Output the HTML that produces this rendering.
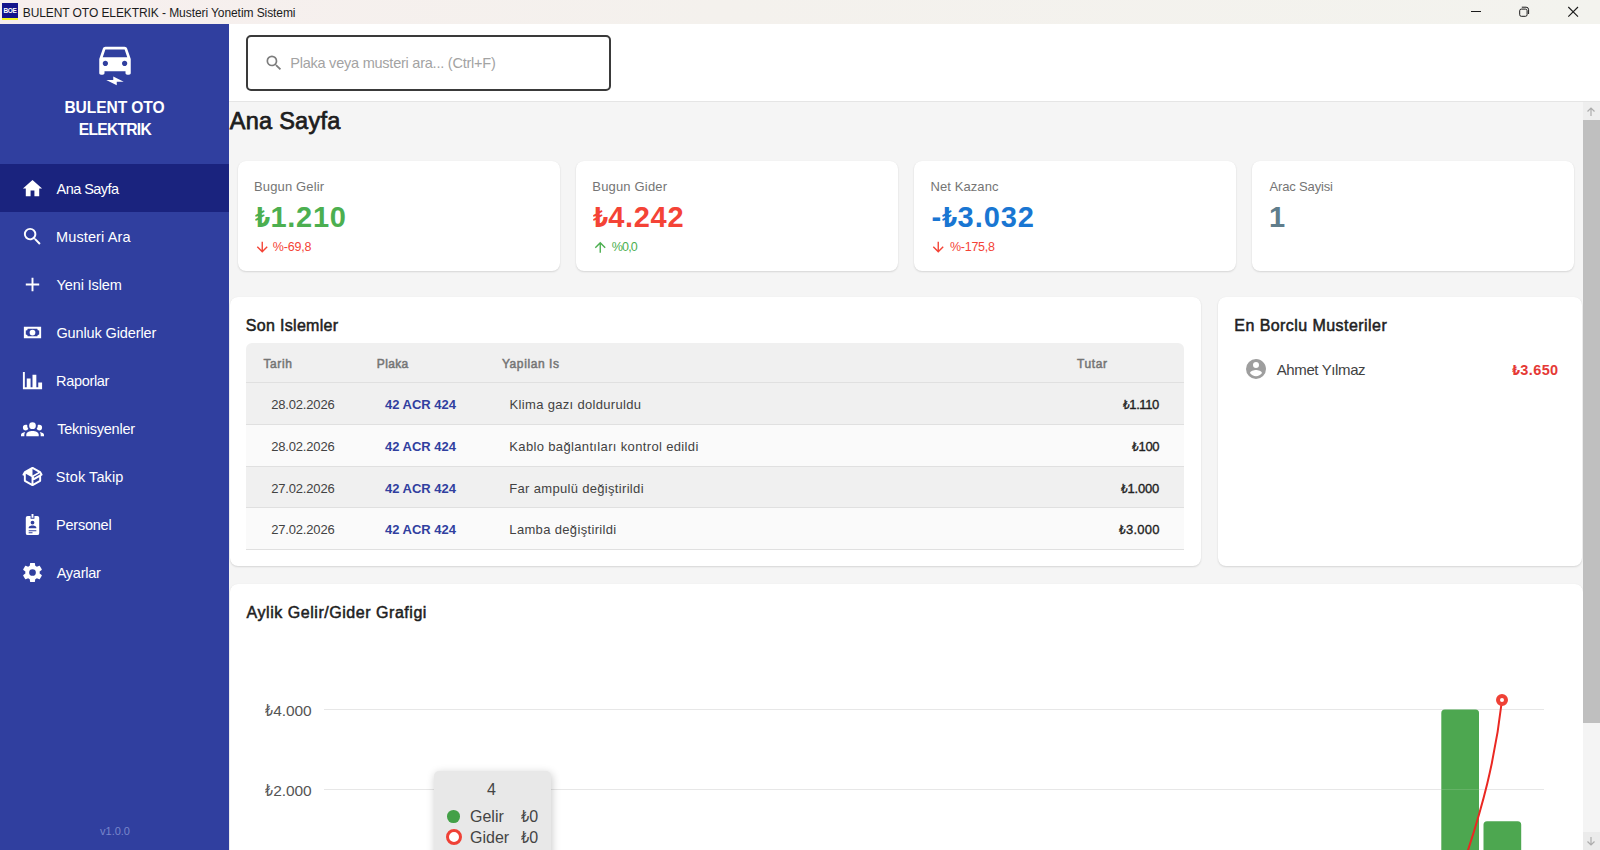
<!DOCTYPE html>
<html lang="tr">
<head>
<meta charset="utf-8">
<title>BULENT OTO ELEKTRIK - Musteri Yonetim Sistemi</title>
<style>
*{box-sizing:border-box;margin:0;padding:0}
html,body{width:1600px;height:850px;overflow:hidden;background:#f5f5f5}
body{font-family:"Liberation Sans","DejaVu Sans",sans-serif;color:#212121;position:relative;-webkit-font-smoothing:antialiased}
.abs{position:absolute}
svg{display:block}
.lira{font-family:"DejaVu Sans","Liberation Sans",sans-serif;display:inline-block;transform:scaleX(.8);transform-origin:0 50%;margin-right:-.127em}

/* ---------- window title bar ---------- */
#titlebar{position:absolute;left:0;top:0;width:1600px;height:24px;background:linear-gradient(90deg,#f7efee 0%,#f4f1ed 45%,#f3f3ee 100%)}
#appicon{position:absolute;left:2px;top:3px;width:16px;height:17px;background:#14148c;border-bottom:2px solid #f2f51e;overflow:hidden}
#appicon span{position:absolute;left:1.500px;top:3.500px;font-size:6.500px;font-weight:bold;color:#fff;letter-spacing:-.35px;line-height:8px}
#wtitle{position:absolute;left:23px;top:5px;font-size:12px;line-height:16px;color:#1b1b1b;white-space:nowrap;letter-spacing:-.07px}
.wbtn{position:absolute;top:0;width:48px;height:24px}

/* ---------- sidebar ---------- */
#sidebar{position:absolute;left:0;top:24px;width:229px;height:826px;background:#303f9f;color:#fff}
#logo{position:absolute;left:93.5px;top:20.5px;width:42px;height:42px}
#brand{position:absolute;left:0;top:73px;width:229px;text-align:center;font-weight:bold;font-size:15.6px;line-height:22px;color:#fff}
.nav{position:absolute;left:0;width:229px;height:48px}
.nav.active{background:#1a237e}
.nav svg{position:absolute;left:20.750px;top:12.500px;width:23px;height:23px;fill:#fff}
.nav span{position:absolute;left:56px;top:15px;font-size:14.500px;line-height:20px;white-space:nowrap}
#ver{position:absolute;left:.500px;top:800px;width:229px;text-align:center;font-size:11px;line-height:14px;color:#7986cb}

/* ---------- header ---------- */
#header{position:absolute;left:229px;top:24px;width:1371px;height:78px;background:#fff;border-bottom:1px solid #e5e5e5}
#search{position:absolute;left:17px;top:11px;width:365px;height:56px;border:2px solid #3a3a3a;border-radius:5px;background:#fff}
#search svg{position:absolute;left:15.800px;top:16.300px;width:20px;height:20px;fill:#7d7d7d}
#search span{position:absolute;left:43px;top:16px;font-size:14.500px;line-height:20px;color:#a3a3a3;white-space:nowrap}

/* ---------- content ---------- */
#content{position:absolute;left:229px;top:102px;width:1354px;height:748px;background:#f5f5f5;overflow:hidden}
#ptitle{position:absolute;left:0px;top:5px;font-size:23.5px;line-height:28px;font-weight:normal;-webkit-text-stroke:.75px #1d1d1d;color:#1d1d1d;white-space:nowrap}
.card{position:absolute;background:#fff;border-radius:8px;box-shadow:0 1px 2px rgba(0,0,0,.13),0 0 1px rgba(0,0,0,.05)}
.stat{top:59px;width:321.500px;height:110px}
.stat .lbl{position:absolute;left:17px;top:18px;font-size:13px;line-height:16px;color:#757575;white-space:nowrap}
.stat .val{position:absolute;left:17px;top:38.500px;font-size:29px;line-height:34px;font-weight:bold;white-space:nowrap}
.stat .dlt{position:absolute;left:17px;top:78px;font-size:12.500px;line-height:16px;white-space:nowrap}
.stat .val .lira{font-size:.94em}
.stat .dlt svg{position:absolute;left:-1px;top:.25px;width:16.500px;height:16.500px}
.stat .dlt span{position:absolute;left:18px;top:0}
.green{color:#4caf50}.red{color:#f44336}.blue{color:#1976d2}.grey{color:#607d8b}
.ctitle{position:absolute;left:16px;top:18.500px;font-size:16px;line-height:20px;font-weight:normal;-webkit-text-stroke:.5px #212121;color:#212121;white-space:nowrap}

/* table */
#tbl{position:absolute;left:16px;top:46px;width:938px;border-radius:6px 6px 0 0;overflow:hidden}
.tr{position:relative;height:42px;border-bottom:1px solid #e0e0e0;font-size:13px;color:#424242}
.tr.h{height:40px;background:#f0f0f0;color:#757575;font-weight:normal;-webkit-text-stroke:.5px #757575;font-size:12px}
.tr.o{background:#f0f0f0}.tr.e{background:#fafafa}
.tr>span{position:absolute;top:14px;line-height:16px;white-space:nowrap}
.tr.h>span{top:13px}
.c1{left:24px}.c2{left:139px;font-weight:bold;color:#303f9f}.c3{left:264px}.c4{right:25px;font-weight:normal;-webkit-text-stroke:.35px #212121;color:#212121}
.tr.h .c1{left:16px}.tr.h .c2{left:131px;color:#757575;font-weight:normal}.tr.h .c3{left:256px}.tr.h .c4{left:830px;right:auto;color:#757575;-webkit-text-stroke:.5px #757575}

/* scrollbar */
#sb{position:absolute;left:1583px;top:102px;width:17px;height:748px;background:#f4f4f4}
#sb .thumb{position:absolute;left:0;top:18px;width:17px;height:602.500px;background:#bfbfbf}
#sb .btn{position:absolute;left:0;width:17px;height:18px;background:#eee}
.ylab{right:1271.500px;font-size:15.500px;line-height:20px;color:#555;white-space:nowrap;letter-spacing:-.1px}
#am .lira,.stat .val .lira,.c2 .lira{margin-right:-.16em}
.tr:not(.h) .c1{letter-spacing:-.17px;margin-left:1.200px}
/*LS*/
#wtitle{letter-spacing:-0.08px;margin-left:-0.3px}
#n1{letter-spacing:-0.57px;margin-left:0.6px}
#n2{letter-spacing:0.12px;margin-left:-0.0px}
#n3{letter-spacing:-0.11px;margin-left:0.5px}
#n4{letter-spacing:-0.12px;margin-left:0.4px}
#n5{letter-spacing:-0.31px;margin-left:-0.0px}
#n6{letter-spacing:-0.25px;margin-left:1.2px}
#n7{letter-spacing:0.1px;margin-left:-0.2px}
#n8{letter-spacing:-0.22px;margin-left:-0.0px}
#n9{letter-spacing:-0.24px;margin-left:0.7px}
#sph{letter-spacing:-0.23px;margin-left:-0.8px}
#ptitle{letter-spacing:0.28px;margin-left:0.7px}
#l1{letter-spacing:0.15px;margin-left:-1.0px}
#l2{letter-spacing:0.17px;margin-left:-0.7px}
#l3{letter-spacing:0.1px;margin-left:-0.6px}
#l4{letter-spacing:-0.17px;margin-left:0.6px}
#v1{letter-spacing:0.76px;margin-left:0.0px}
#v2{letter-spacing:0.67px;margin-left:0.0px}
#v3{letter-spacing:0.96px;margin-left:0.4px}
#d1{letter-spacing:-0.2px;margin-left:-0.2px}
#d2{letter-spacing:-0.84px;margin-left:0.8px}
#d3{letter-spacing:-0.28px;margin-left:1.0px}
#t1{letter-spacing:0.31px;margin-left:-0.2px}
#t2{letter-spacing:0.44px;margin-left:0.3px}
#t3{letter-spacing:0.54px;margin-left:0.6px}
#h1{letter-spacing:0.65px;margin-left:1.4px}
#h2{letter-spacing:0.35px;margin-left:-0.2px}
#h3{letter-spacing:0.59px;margin-left:-0.1px}
#h4{letter-spacing:0.57px;margin-left:1.1px}
#j1{letter-spacing:0.32px;margin-left:-0.4px}
#j2{letter-spacing:0.35px;margin-left:-0.7px}
#j3{letter-spacing:0.32px;margin-left:-0.7px}
#j4{letter-spacing:0.34px;margin-left:-0.7px}
#a1{letter-spacing:-0.42px;margin-right:0.2px}
#a2{letter-spacing:-0.38px;margin-right:-0.1px}
#a3{letter-spacing:-0.21px;margin-right:-0.0px}
#a4{letter-spacing:0.24px;margin-right:-0.7px}
#ay{letter-spacing:-0.38px;margin-left:0.7px}
#am{letter-spacing:0.37px;margin-right:-1.0px}
/*ENDLS*/
</style>
</head>
<body>

<!-- window title bar -->
<div id="titlebar">
  <div id="appicon"><span>BOE</span></div>
  <div id="wtitle">BULENT OTO ELEKTRIK - Musteri Yonetim Sistemi</div>
  <svg class="wbtn" style="left:1452px" viewBox="0 0 48 24"><path d="M19 11.5h10" stroke="#1b1b1b" stroke-width="1" fill="none"/></svg>
  <svg class="wbtn" style="left:1500px" viewBox="0 0 48 24"><rect x="19.700" y="9.100" width="7.400" height="7.200" rx="1.600" stroke="#1b1b1b" stroke-width="1" fill="none"/><path d="M21.800 7.200h4.300a2.500 2.500 0 0 1 2.500 2.500v4.300" stroke="#1b1b1b" stroke-width="1" fill="none"/></svg>
  <svg class="wbtn" style="left:1549px" viewBox="0 0 48 24"><path d="M19.300 7l9.700 9.700M29 7l-9.700 9.700" stroke="#1b1b1b" stroke-width="1.100" fill="none"/></svg>
</div>

<!-- sidebar -->
<div id="sidebar">
  <svg id="logo" viewBox="0 0 24 24" fill="#fff"><path d="M18.920 2.010C18.720 1.420 18.160 1 17.500 1h-11c-.660 0-1.210.420-1.420 1.010L3 8v8c0 .550.450 1 1 1h1c.550 0 1-.450 1-1v-1h12v1c0 .550.450 1 1 1h1c.550 0 1-.450 1-1V8l-2.080-5.990zM6.500 12c-.830 0-1.500-.670-1.500-1.500S5.670 9 6.500 9 8 9.670 8 10.500 7.330 12 6.500 12zm11 0c-.830 0-1.500-.670-1.500-1.500S16.670 9 17.500 9s1.500.670 1.500 1.500-.670 1.500-1.500 1.500zM5 7l1.500-4.500h11L19 7H5z"/><path d="M7 20h4v-2l6 3h-4v2z"/></svg>
  <div id="brand"><span style="letter-spacing:-.1px">BULENT OTO</span><br><span style="letter-spacing:-.72px;margin-left:.7px">ELEKTRIK</span></div>

  <div class="nav active" style="top:140px"><svg viewBox="0 0 24 24"><path d="M10,20V14H14V20H19V12H22L12,3L2,12H5V20H10Z"/></svg><span id="n1">Ana Sayfa</span></div>
  <div class="nav" style="top:188px"><svg viewBox="0 0 24 24"><path d="M9.500,3A6.500,6.500 0 0,1 16,9.500C16,11.110 15.410,12.590 14.440,13.730L14.710,14H15.500L20.500,19L19,20.500L14,15.500V14.710L13.730,14.440C12.590,15.410 11.110,16 9.500,16A6.500,6.500 0 0,1 3,9.500A6.500,6.500 0 0,1 9.500,3M9.500,5C7,5 5,7 5,9.500C5,12 7,14 9.500,14C12,14 14,12 14,9.500C14,7 12,5 9.500,5Z"/></svg><span id="n2">Musteri Ara</span></div>
  <div class="nav" style="top:236px"><svg viewBox="0 0 24 24"><path d="M19,13H13V19H11V13H5V11H11V5H13V11H19V13Z"/></svg><span id="n3">Yeni Islem</span></div>
  <div class="nav" style="top:284px"><svg viewBox="0 0 24 24"><path fill-rule="evenodd" d="M3,6H21V18H3V6M12,9A3,3 0 0,1 15,12A3,3 0 0,1 12,15A3,3 0 0,1 9,12A3,3 0 0,1 12,9M7,8A2,2 0 0,1 5,10V14A2,2 0 0,1 7,16H17A2,2 0 0,1 19,14V10A2,2 0 0,1 17,8H7Z"/></svg><span id="n4">Gunluk Giderler</span></div>
  <div class="nav" style="top:332px"><svg viewBox="0 0 24 24"><path d="M22,21H2V3H4V19H6V10H10V19H12V6H16V19H18V14H22V21Z"/></svg><span id="n5">Raporlar</span></div>
  <div class="nav" style="top:380px"><svg viewBox="0 0 24 24"><path d="M12,5.500A3.500,3.500 0 0,1 15.500,9A3.500,3.500 0 0,1 12,12.500A3.500,3.500 0 0,1 8.500,9A3.500,3.500 0 0,1 12,5.500M5,8C5.560,8 6.080,8.150 6.530,8.420C6.380,9.850 6.800,11.270 7.660,12.380C7.160,13.340 6.160,14 5,14A3,3 0 0,1 2,11A3,3 0 0,1 5,8M19,8A3,3 0 0,1 22,11A3,3 0 0,1 19,14C17.840,14 16.840,13.340 16.340,12.380C17.200,11.270 17.620,9.850 17.470,8.420C17.920,8.150 18.440,8 19,8M5.500,18.250C5.500,16.180 8.410,14.500 12,14.500C15.590,14.500 18.500,16.180 18.500,18.250V20H5.500V18.250M0,20V18.500C0,17.110 1.890,15.940 4.450,15.600C3.860,16.280 3.500,17.220 3.500,18.250V20H0M24,20H20.500V18.250C20.500,17.220 20.140,16.280 19.550,15.600C22.110,15.940 24,17.110 24,18.500V20Z"/></svg><span id="n6">Teknisyenler</span></div>
  <div class="nav" style="top:428px"><svg viewBox="0 0 24 24"><path fill-rule="evenodd" d="M2,10.960C1.500,10.680 1.350,10.070 1.630,9.590L3.130,7C3.240,6.800 3.410,6.660 3.600,6.580L11.430,2.180C11.590,2.060 11.790,2 12,2C12.210,2 12.410,2.060 12.570,2.180L20.470,6.620C20.660,6.720 20.820,6.880 20.910,7.080L22.360,9.600C22.640,10.080 22.470,10.690 22,10.960L21,11.540V16.500C21,16.880 20.790,17.210 20.470,17.380L12.570,21.820C12.410,21.940 12.210,22 12,22C11.790,22 11.590,21.940 11.430,21.820L3.530,17.380C3.210,17.210 3,16.880 3,16.500V10.960C2.700,11.130 2.320,11.140 2,10.960M12,4.150V10.850L17.960,7.500L12,4.150M5,15.910L11,19.290V12.580L5,9.210V15.910M19,15.910V12.690L14,15.590C13.670,15.770 13.300,15.760 13,15.600V19.290L19,15.910M13.850,13.360L20.130,9.730L19.550,8.720L13.270,12.350L13.850,13.360Z"/></svg><span id="n7">Stok Takip</span></div>
  <div class="nav" style="top:476px"><svg viewBox="0 0 24 24"><path fill-rule="evenodd" d="M17,3H14V6H10V3H7A2,2 0 0,0 5,5V21A2,2 0 0,0 7,23H17A2,2 0 0,0 19,21V5A2,2 0 0,0 17,3M12,8A2,2 0 0,1 14,10A2,2 0 0,1 12,12A2,2 0 0,1 10,10A2,2 0 0,1 12,8M16,16H8V15C8,13.670 10.670,13 12,13C13.330,13 16,13.670 16,15V16M13,5H11V1H13V5M16,19H8V18H16V19M12,21H8V20H12V21Z"/></svg><span id="n8">Personel</span></div>
  <div class="nav" style="top:524px"><svg viewBox="0 0 24 24"><path fill-rule="evenodd" d="M12,15.500A3.500,3.500 0 0,1 8.500,12A3.500,3.500 0 0,1 12,8.500A3.500,3.500 0 0,1 15.500,12A3.500,3.500 0 0,1 12,15.500M19.430,12.970C19.470,12.650 19.500,12.330 19.500,12C19.500,11.670 19.470,11.340 19.430,11L21.540,9.370C21.730,9.220 21.780,8.950 21.660,8.730L19.660,5.270C19.540,5.050 19.270,4.960 19.050,5.050L16.560,6.050C16.040,5.660 15.500,5.320 14.870,5.070L14.500,2.420C14.460,2.180 14.250,2 14,2H10C9.750,2 9.540,2.180 9.500,2.420L9.130,5.070C8.500,5.320 7.960,5.660 7.440,6.050L4.950,5.050C4.730,4.960 4.460,5.050 4.340,5.270L2.340,8.730C2.210,8.950 2.270,9.220 2.460,9.370L4.570,11C4.530,11.340 4.500,11.670 4.500,12C4.500,12.330 4.530,12.650 4.570,12.970L2.460,14.630C2.270,14.780 2.210,15.050 2.340,15.270L4.340,18.730C4.460,18.950 4.730,19.030 4.950,18.950L7.440,17.940C7.960,18.340 8.500,18.680 9.130,18.930L9.500,21.580C9.540,21.820 9.750,22 10,22H14C14.250,22 14.460,21.820 14.500,21.580L14.870,18.930C15.500,18.670 16.040,18.340 16.560,17.940L19.050,18.950C19.270,19.030 19.540,18.950 19.660,18.730L21.660,15.270C21.780,15.050 21.730,14.780 21.540,14.630L19.430,12.970Z"/></svg><span id="n9">Ayarlar</span></div>

  <div id="ver">v1.0.0</div>
</div>

<!-- header -->
<div id="header">
  <div id="search">
    <svg viewBox="0 0 24 24"><path d="M9.500,3A6.500,6.500 0 0,1 16,9.500C16,11.110 15.410,12.590 14.440,13.730L14.710,14H15.500L20.500,19L19,20.500L14,15.500V14.710L13.730,14.440C12.590,15.410 11.110,16 9.500,16A6.500,6.500 0 0,1 3,9.500A6.500,6.500 0 0,1 9.500,3M9.500,5C7,5 5,7 5,9.500C5,12 7,14 9.500,14C12,14 14,12 14,9.500C14,7 12,5 9.500,5Z"/></svg>
    <span id="sph">Plaka veya musteri ara... (Ctrl+F)</span>
  </div>
</div>

<!-- content -->
<div id="content">
  <div id="ptitle">Ana Sayfa</div>

  <div class="card stat" style="left:9px"><div class="lbl" id="l1">Bugun Gelir</div><div id="v1" class="val green"><span class="lira">₺</span>1.210</div><div class="dlt red"><svg viewBox="0 0 24 24" fill="currentColor"><path d="M11,4H13V16L18.500,10.500L19.920,11.920L12,19.840L4.080,11.920L5.500,10.500L11,16V4Z"/></svg><span id="d1">%-69,8</span></div></div>
  <div class="card stat" style="left:347px"><div class="lbl" id="l2">Bugun Gider</div><div id="v2" class="val red"><span class="lira">₺</span>4.242</div><div class="dlt green"><svg viewBox="0 0 24 24" fill="currentColor"><path d="M13,20H11V8L5.500,13.500L4.080,12.080L12,4.160L19.920,12.080L18.500,13.500L13,8V20Z"/></svg><span id="d2">%0,0</span></div></div>
  <div class="card stat" style="left:685px"><div class="lbl" id="l3">Net Kazanc</div><div id="v3" class="val blue">-<span class="lira">₺</span>3.032</div><div class="dlt red"><svg viewBox="0 0 24 24" fill="currentColor"><path d="M11,4H13V16L18.500,10.500L19.920,11.920L12,19.840L4.080,11.920L5.500,10.500L11,16V4Z"/></svg><span id="d3">%-175,8</span></div></div>
  <div class="card stat" style="left:1023px"><div class="lbl" id="l4">Arac Sayisi</div><div id="v4" class="val grey">1</div></div>


  <div class="card" style="left:1px;top:195px;width:971px;height:269px">
    <div class="ctitle" id="t1">Son Islemler</div>
    <div id="tbl">
      <div class="tr h"><span class="c1" id="h1">Tarih</span><span class="c2" id="h2">Plaka</span><span class="c3" id="h3">Yapilan Is</span><span class="c4" id="h4">Tutar</span></div>
      <div class="tr o"><span class="c1">28.02.2026</span><span class="c2">42 ACR 424</span><span class="c3" id="j1">Klima gazı dolduruldu</span><span class="c4" id="a1"><span class="lira">₺</span>1.110</span></div>
      <div class="tr e"><span class="c1">28.02.2026</span><span class="c2">42 ACR 424</span><span class="c3" id="j2">Kablo bağlantıları kontrol edildi</span><span class="c4" id="a2"><span class="lira">₺</span>100</span></div>
      <div class="tr o" style="height:41px"><span class="c1">27.02.2026</span><span class="c2">42 ACR 424</span><span class="c3" id="j3">Far ampulü değiştirildi</span><span class="c4" id="a3"><span class="lira">₺</span>1.000</span></div>
      <div class="tr e"><span class="c1">27.02.2026</span><span class="c2">42 ACR 424</span><span class="c3" id="j4">Lamba değiştirildi</span><span class="c4" id="a4"><span class="lira">₺</span>3.000</span></div>
    </div>
  </div>
  <div class="card" style="left:989px;top:195px;width:364px;height:269px">
    <div class="ctitle" id="t2">En Borclu Musteriler</div>
    <svg class="abs" style="left:25.800px;top:59.500px;width:24px;height:24px" viewBox="0 0 24 24" fill="#9e9e9e"><path d="M12,19.200C9.500,19.200 7.290,17.920 6,16C6.030,14 10,12.900 12,12.900C14,12.900 17.970,14 18,16C16.710,17.920 14.500,19.200 12,19.200M12,5A3,3 0 0,1 15,8A3,3 0 0,1 12,11A3,3 0 0,1 9,8A3,3 0 0,1 12,5M12,2A10,10 0 0,0 2,12A10,10 0 0,0 12,22A10,10 0 0,0 22,12C22,6.470 17.500,2 12,2Z"/></svg>
    <div class="abs" style="left:58px;top:62.500px;font-size:15px;line-height:20px;color:#424242;white-space:nowrap" id="ay">Ahmet Yılmaz</div>
    <div class="abs red" style="right:24.500px;top:62.500px;font-size:14.500px;line-height:20px;font-weight:bold;white-space:nowrap;color:#e53935" id="am"><span class="lira">₺</span>3.650</div>
  </div>


  <div class="card" style="left:1px;top:482px;width:1353px;height:300px;border-radius:8px 8px 0 0">
    <div class="ctitle" id="t3">Aylik Gelir/Gider Grafigi</div>
    <svg class="abs" style="left:0;top:0" width="1353" height="270" viewBox="0 0 1353 270" font-family="Liberation Sans, DejaVu Sans, sans-serif">
      <path d="M94 125.500H1314M94 205.500H1314" stroke="#e7e7e7" stroke-width="1" fill="none"/>
      
      
      <path d="M1211.300 270V129a3.500 3.500 0 0 1 3.500-3.500h30.700a3.500 3.500 0 0 1 3.500 3.500V270z" fill="#4da750"/>
      <path d="M1253.500 270V240.700a3.500 3.500 0 0 1 3.500-3.500h30.700a3.500 3.500 0 0 1 3.500 3.500V270z" fill="#4da750"/>
      <path d="M1211.300 205.500H1249" stroke="#fff" stroke-opacity=".13" stroke-width="1" fill="none"/>
      <path d="M1272 116C1265 177.600 1251.800 224.500 1235.800 272.900" stroke="#ea2822" stroke-width="2" fill="none"/>
      <circle cx="1272" cy="116" r="4" fill="#fff" stroke="#ef4136" stroke-width="4"/>
    </svg>
    <div class="abs ylab" id="y1" style="top:117px"><span class="lira">₺</span>4.000</div>
    <div class="abs ylab" id="y2" style="top:197px"><span class="lira">₺</span>2.000</div>
    <div class="abs" style="left:204px;top:187px;width:117px;height:90px;background:#e8e8e8;border-radius:5px;box-shadow:1px 2px 8px rgba(0,0,0,.22);font-size:16px;color:#444">
      <div class="abs" style="left:0;top:9px;width:115px;text-align:center;line-height:20px">4</div>
      <div class="abs" style="left:13px;top:39px;width:12.600px;height:12.600px;border-radius:50%;background:#43a047"></div>
      <div class="abs" style="left:36px;top:36px;line-height:20px">Gelir</div>
      <div class="abs" style="left:87px;top:36px;line-height:20px;white-space:nowrap"><span class="lira">₺</span>0</div>
      <div class="abs" style="left:11.600px;top:58px;width:16px;height:16px;border-radius:50%;background:#fff;border:3.500px solid #ef4136"></div>
      <div class="abs" style="left:36px;top:57px;line-height:20px">Gider</div>
      <div class="abs" style="left:87px;top:57px;line-height:20px;white-space:nowrap"><span class="lira">₺</span>0</div>
    </div>
  </div>

</div>

<!-- scrollbar -->
<div id="sb">
  <div class="btn" style="top:0"><svg viewBox="0 0 17 18" width="17" height="18"><path d="M8 6v8M4.500 9.500l3.500-3.500 3.500 3.500" stroke="#adadad" stroke-width="1.200" fill="none"/></svg></div>
  <div class="thumb"></div>
  <div class="btn" style="top:730px;background:#ebebeb"><svg viewBox="0 0 17 18" width="17" height="18"><path d="M8 5v8M4.500 9.500l3.500 3.500 3.500-3.500" stroke="#adadad" stroke-width="1.200" fill="none"/></svg></div>
</div>

</body>
</html>
